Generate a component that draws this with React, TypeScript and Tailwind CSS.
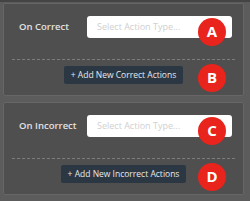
import React from "react";

function Badge({ letter }: { letter: string }) {
  return (
    <span className="absolute right-[17px] top-1/2 flex h-[28px] w-[28px] -translate-y-1/2 items-center justify-center rounded-full bg-[#e8241c] text-[15px] font-bold leading-none text-white">
      {letter}
    </span>
  );
}

function Section({
  label,
  button,
  a,
  b,
}: {
  label: string;
  button: string;
  a: string;
  b: string;
}) {
  return (
    <div className="w-[241px] rounded-[2px] border border-[#666666] bg-[#4f4f4f]">
      <div className="relative flex items-center pb-[21px] pt-[12px]">
        <span className="w-[83px] shrink-0 pl-[15px] text-[9.5px] font-semibold text-[#e2e2e2]">
          {label}
        </span>
        <div className="flex h-[22px] w-[145px] items-center rounded-[3px] bg-white pl-[10px] text-[9px] text-[#d0d0d0]">
          Select Action Type...
        </div>
        <Badge letter={a} />
      </div>
      <div className="mx-[8px] border-t border-dashed border-[#7c7c7c]" />
      <div className="relative flex items-start justify-center pb-[11px] pt-[6px]">
        <button className="h-[18px] rounded-[2px] bg-[#2c3744] px-[7px] text-[8.5px] leading-none text-[#e8e8e8]">
          {button}
        </button>
        <Badge letter={b} />
      </div>
    </div>
  );
}

export default function App() {
  return (
    <div
      className="flex h-[201px] w-[250px] flex-col gap-[6px] border-t-[2px] border-[#444444] bg-[#5c5c5c] pl-[3px] pt-[1px]"
      style={{ fontFamily: '"Open Sans", sans-serif' }}
    >
      <Section label="On Correct" button="+ Add New Correct Actions" a="A" b="B" />
      <Section label="On Incorrect" button="+ Add New Incorrect Actions" a="C" b="D" />
    </div>
  );
}
